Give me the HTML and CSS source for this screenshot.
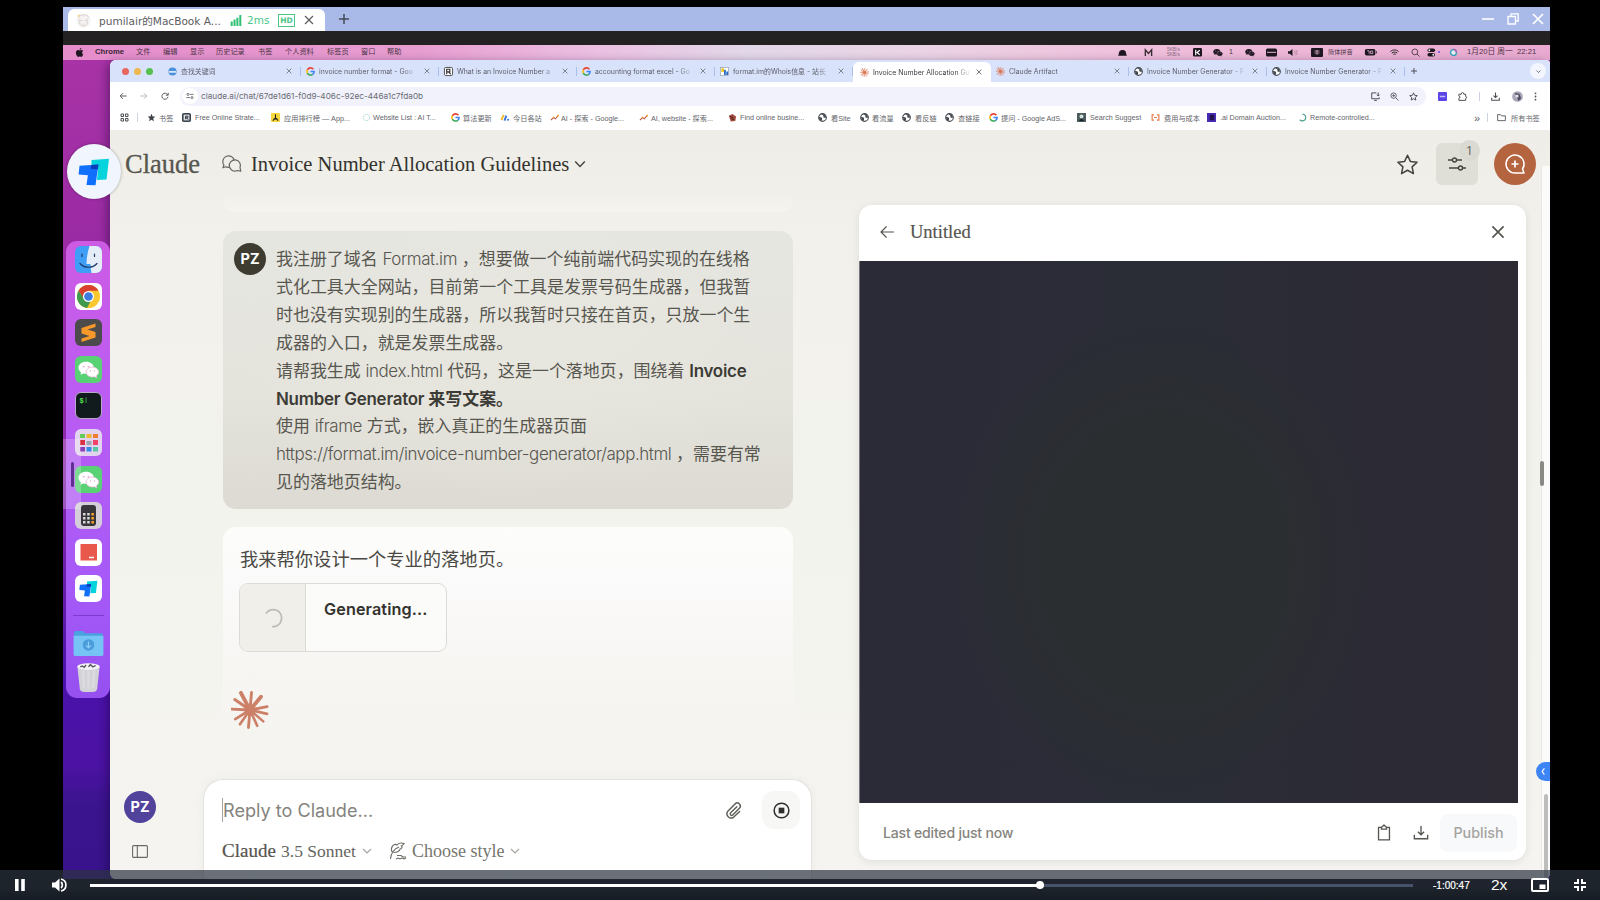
FILE: index.html
```html
<!DOCTYPE html>
<html lang="en">
<head>
<meta charset="utf-8">
<title>Invoice Number Allocation Guidelines</title>
<link rel="stylesheet" href="styles.css">
</head>
<body>
<svg class="defs" aria-hidden="true">
  <symbol id="x" viewBox="0 0 10 10"><path d="M1 1l8 8M9 1l-8 8" fill="none" stroke="currentColor" stroke-width="1.2"/></symbol>
  <symbol id="plus" viewBox="0 0 10 10"><path d="M5 0v10M0 5h10" fill="none" stroke="currentColor" stroke-width="1.5"/></symbol>
  <symbol id="chev" viewBox="0 0 10 10"><path d="M1 3l4 4 4-4" fill="none" stroke="currentColor" stroke-width="1.2"/></symbol>
  <symbol id="google" viewBox="0 0 10 10"><g fill="none" stroke-width="1.8"><path d="M8.2 2.4A4 4 0 0 0 1.5 3.2" stroke="#ea4335"/><path d="M1.5 3.2a4 4 0 0 0 0 3.6" stroke="#fbbc05"/><path d="M1.5 6.8a4 4 0 0 0 6 1.3" stroke="#34a853"/><path d="M7.5 8.1A4 4 0 0 0 9 5H5" stroke="#4285f4"/></g></symbol>
  <symbol id="globe" viewBox="0 0 10 10"><circle cx="5" cy="5" r="4.3" fill="#fff" stroke="#444a50" stroke-width="1.2"/><path d="M1 4.5c2 .3 2.300-.2 3.300 1S3.500 8 4.500 9L2 8zM4 .8c0 2 2.500 1 2 3s2 1.500 3 1.200L8 1.800z" fill="#444a50"/></symbol>
  <symbol id="burst" viewBox="-10 -10 20 20"><g stroke="currentColor" stroke-linecap="round"><path d="M0 0L-4.800-9" stroke-width="2"/><path d="M0 0L.8-9.200" stroke-width="1.500"/><path d="M0 0L5.800-7" stroke-width="2"/><path d="M0 0L9-1.800" stroke-width="1.500"/><path d="M0 0L9 2" stroke-width="1.500"/><path d="M0 0L7 6" stroke-width="1.300"/><path d="M0 0L3.800 8.300" stroke-width="1.400"/><path d="M0 0L-.8 9.200" stroke-width="1.500"/><path d="M0 0L-5.300 7.500" stroke-width="1.400"/><path d="M0 0L-7.800 4.800" stroke-width="1.400"/><path d="M0 0L-9.500-.5" stroke-width="1.500"/><path d="M0 0L-8-5.500" stroke-width="1.600"/></g><circle r="3" fill="currentColor"/></symbol>
  <symbol id="wechat" viewBox="0 0 24 24"><path d="M9.500 4C4.800 4 1.500 6.800 1.500 10.200c0 2 1.100 3.600 2.800 4.800L3.500 17.500l3-1.400c1 .3 2 .4 3 .4 4.600 0 8-2.700 8-6.300S14 4 9.500 4z" fill="currentColor"/><path d="M16 9.500c-3.700 0-6.500 2.300-6.500 5.200s2.800 5.200 6.500 5.200c.8 0 1.600-.1 2.300-.3l2.500 1.300-.6-2.200c1.500-1 2.400-2.400 2.400-4 0-2.900-2.900-5.200-6.600-5.200z" fill="currentColor" class="wc-front"/><g class="wc-eyes"><circle cx="7" cy="9" r="1"/><circle cx="12" cy="9" r="1"/><circle cx="14" cy="13.500" r=".8"/><circle cx="18.200" cy="13.500" r=".8"/></g></symbol>
  <symbol id="star" viewBox="0 0 24 24"><path d="M12 2.300l3 6.500 7 .8-5.200 4.900 1.400 7-6.200-3.500-6.200 3.500 1.400-7L2 9.600l7-.8z" fill="none" stroke="currentColor" stroke-width="1.600" stroke-linejoin="round"/></symbol>
  <symbol id="trend" viewBox="0 0 10 10"><path d="M1 8l3-3 2 1.500L9 3" fill="none" stroke="#c05a45" stroke-width="1.200"/><circle cx="9" cy="2.800" r="1" fill="#f2a825"/><circle cx="4" cy="4.800" r=".8" fill="#f2a825"/></symbol>
  <symbol id="download" viewBox="0 0 18 18"><path d="M9 1v10M5.500 7.500L9 11l3.500-3.500M1.500 11v4.500h15V11" fill="none" stroke="currentColor" stroke-width="1.500"/></symbol>
  <symbol id="todesk" viewBox="0 0 32 28"><path d="M13.500 2L31 .8 28.500 21.500 19 22l1-11-6.500-.5z" fill="#06d3dc"/><path d="M1.500 7.800L20.500 6.500 17.500 27.300 8.500 27l1.400-9.800L.6 16.500z" fill="#1170fb"/><path d="M13.200 7L20.500 6.500 19.800 11.200 12.900 11z" fill="#0a3db8"/></symbol>
</svg>

<div class="stage">
  <div class="remote">
    <div class="rtabs">
      <div class="rtab">
        <svg class="ravatar" viewBox="0 0 16 16"><circle cx="8" cy="8" r="7.500" fill="#f5f3f1"/><path d="M2 5c2-4 10-4 12 0M4 6v5c1 4 7 4 8 0V6M5 8h2M9 8h2M7 12h2" fill="none" stroke="#cdc6c3" stroke-width=".8"/><circle cx="3" cy="3" r="1.300" fill="#efd79c"/></svg>
        <span class="rname">pumilair的MacBook A...</span>
        <svg class="rsig" viewBox="0 0 12 12"><path d="M1.300 7v5M4.400 5v7M7.500 3v9M10.700 0v12" stroke="#31bf74" stroke-width="2.200"/></svg>
        <span class="rping">2ms</span><span class="rhd">HD</span>
        <svg class="rx"><use href="#x"/></svg>
      </div>
      <svg class="rplus"><use href="#plus"/></svg>
      <div class="rwin">
        <svg viewBox="0 0 12 12"><path d="M0 6h12" stroke="#fff" stroke-width="1.600"/></svg>
        <svg viewBox="0 0 12 12"><path d="M1 3.500h7.500V11H1zM4 3V.8h7.200V8H9" fill="none" stroke="#fff" stroke-width="1.300"/></svg>
        <svg viewBox="0 0 12 12"><path d="M1 1l10 10M11 1L1 11" stroke="#fff" stroke-width="1.700"/></svg>
      </div>
    </div>
    <div class="rbar"></div>

    <div class="menubar">
      <svg viewBox="0 0 10 10"><path d="M7 0c.1 1.200-.9 2-1.900 2C5 1 5.900.1 7 0zM9 7.200C8.500 8.600 7.700 9.900 6.800 9.900 6.200 9.900 6 9.500 5.200 9.500s-1 .4-1.600.4C2.500 9.900 1 7.300 1 5.200c0-2 1.300-2.900 2.400-2.900.8 0 1.300.4 1.900.4.500 0 1.100-.5 2-.5.700 0 1.300.3 1.700.9C7.500 4.200 7.700 6.500 9 7.200z"/></svg>
      <b>Chrome</b><span>文件</span><span>编辑</span><span>显示</span><span>历史记录</span><span>书签</span><span>个人资料</span><span>标签页</span><span>窗口</span><span>帮助</span>
      <svg viewBox="0 0 10 10"><path d="M0 8.500C1 8 .8 5.500 1.500 4 2.200 1.500 7.800 1.500 8.500 4c.7 1.500.5 4 1.500 4.500z"/></svg>
      <svg viewBox="0 0 10 10"><path d="M1.500 9V2L5 6l3.500-4v7" fill="none" stroke="#3a2c35" stroke-width="1.500"/></svg>
      <span class="net">5KB/s<br>5KB/s</span>
      <svg viewBox="0 0 10 10"><rect width="10" height="9.500" rx="1.500"/><path d="M3 2v6M7.500 2.500L4.500 5l3 2.500" fill="none" stroke="#fff" stroke-width="1.300"/></svg>
      <svg class="wide" viewBox="0 2 24 20"><use href="#wechat" width="24" height="24"/></svg><span>1</span>
      <svg class="wide" viewBox="0 2 24 20"><use href="#wechat" width="24" height="24"/></svg>
      <svg class="card" viewBox="0 0 11 9"><rect y=".5" width="11" height="8" rx="1.500"/><path d="M1 4.300h9" stroke="#e8b8d8"/></svg>
      <svg viewBox="0 0 10 10"><path d="M0 3.500h2L5 1v8L2 6.500H0z"/><path d="M7 3c1.200 1 1.200 3 0 4M8.600 2c2 2 2 4 0 6" fill="none" stroke="#9a7288" stroke-width=".8"/></svg>
      <svg class="wide" viewBox="0 0 12 9"><rect width="12" height="9" rx="1"/><path d="M3.500 3h5M3.500 5h5M6 2v5" stroke="#d9a8c7" stroke-width=".8"/></svg>
      <span class="dim">简体拼音</span>
      <svg class="batt" viewBox="0 0 14 8"><rect width="12" height="7.500" rx="2"/><path d="M13.300 2.500v2.500" stroke="#333"/><path d="M2.500 2h2.300v3.500M6.500 2.300h2.500v3h-2.500z" stroke="#e8b8d8" fill="none" stroke-width=".9"/></svg>
      <svg viewBox="0 0 10 8"><path d="M.5 3c2.500-2.500 6.500-2.500 9 0M2 4.700c1.800-1.600 4.200-1.600 6 0M3.600 6.200c.9-.7 1.900-.7 2.800 0" fill="none" stroke="#222" stroke-width="1.100"/></svg>
      <svg viewBox="0 0 10 10"><circle cx="4.300" cy="4.300" r="3.200" fill="none" stroke="#4c3c46"/><path d="M6.700 6.700L9.500 9.500" stroke="#4c3c46"/></svg>
      <svg viewBox="0 0 10 10"><rect y=".5" x=".5" width="8.500" height="4" rx="2"/><rect y="5.500" x=".5" width="8.500" height="4" rx="2"/><circle cx="2.600" cy="2.500" r="1" fill="#fff"/><circle cx="7" cy="7.500" r="1" fill="#fff"/></svg>
      <i class="dot"></i>
      <svg viewBox="0 0 10 10"><circle cx="5" cy="5" r="3.300" fill="#e9f1f6" stroke="#3aa4b8" stroke-width="1.600"/><path d="M5 1.700A3.300 3.300 0 0 1 8.300 5" fill="none" stroke="#c05aa6" stroke-width="1.600"/></svg>
      <span class="date">1月20日 周一&nbsp; 22:21</span>
    </div>

    <div class="desktop">
      <div class="dockcol">
        <div class="dock">
          <svg viewBox="0 0 27 27"><rect width="27" height="27" rx="6" fill="#3f9ef5"/><path d="M14.500 0H21a6 6 0 0 1 6 6v15a6 6 0 0 1-6 6h-4.500c-.8-3-1-6-1-9h-4C11.500 11 13 5 14.500 0z" fill="#e4edf8"/><path d="M7 8v2.500M19.500 8v2.500M5 17.500c4.500 5 12.500 5 17 0" fill="none" stroke="#1f3a66" stroke-width="1.200" stroke-linecap="round"/></svg>
          <svg viewBox="0 0 27 27"><rect width="27" height="27" rx="6" fill="#fff"/><circle cx="13.500" cy="13.500" r="11.500" fill="#fbc72f"/><path d="M3.500 7.800a11.500 11.500 0 0 1 20 0h-10L9 16z" fill="#d9412f"/><path d="M3.500 7.800A11.500 11.500 0 0 0 12 25l5-9.500H9z" fill="#3f9a4e"/><circle cx="13.500" cy="13.500" r="5.500" fill="#fff"/><circle cx="13.500" cy="13.500" r="4.300" fill="#3c7be0"/></svg>
          <svg viewBox="0 0 27 27"><rect width="27" height="27" rx="6" fill="#4c4a4b"/><path d="M20.500 4.500L6.500 9v5.500l8 2.500L6.500 19.500V23l14-4.500V13l-8-2.500 8-2.500z" fill="#f7992a"/></svg>
          <svg class="wx" viewBox="0 0 27 27"><rect width="27" height="27" rx="6" fill="#58d275"/><use href="#wechat" x="2" y="1.500" width="23" height="24"/></svg>
          <svg viewBox="0 0 27 27"><rect x=".5" y=".5" width="26" height="26" rx="5.500" fill="#111a1c" stroke="#b9a8c9"/><path d="M11 5.500v5.500" stroke="#2fa43e"/><text x="4.500" y="11" class="prompt">$</text></svg>
          <svg viewBox="0 0 27 27"><rect width="27" height="27" rx="6" fill="#e3d3ee"/><path fill="#63cb57" d="M5 5h5v4H5z"/><path fill="#efb72c" d="M11.500 5h5v4h-5z"/><path fill="#ee7c31" d="M18 5h5v4h-5z"/><path fill="#d93042" d="M5 11h5v5H5z"/><path fill="#9ca5ad" d="M11.500 12h5v4h-5z"/><path fill="#f0456a" d="M18 11h5v5h-5z"/><path fill="#8c3fb8" d="M5 18h5v4.500H5z"/><path fill="#3388e6" d="M11.500 18h5v4.500h-5z"/><path fill="#57c9a0" d="M18 18h5v4.500h-5z"/></svg>
          <svg class="wx" viewBox="0 0 27 27"><rect width="27" height="27" rx="6" fill="#58d275"/><use href="#wechat" x="2" y="1.500" width="23" height="24"/></svg>
          <svg viewBox="0 0 27 27"><rect width="27" height="27" rx="6" fill="#d5cdd9"/><rect x="6" y="3" width="15" height="21" rx="3" fill="#38363b"/><path d="M8 11h2.500v2.500H8zM12.200 11h2.500v2.500h-2.500zM8 15h2.500v2.500H8zM12.200 15h2.500v2.500h-2.500zM8 19h2.500v2.500H8zM12.200 19h2.500v2.500h-2.500z" fill="#d9d9d9"/><path d="M16.400 11h2.500v2.500h-2.500zM16.400 15h2.500v2.500h-2.500zM16.400 19h2.500v2.500h-2.500z" fill="#f6a02d"/></svg>
          <svg viewBox="0 0 27 27"><rect width="27" height="27" rx="6" fill="#fff"/><rect x="5.500" y="5" width="16.500" height="16.500" fill="#e8594b"/><path d="M14 18.500h5" stroke="#fff" stroke-width="1.500"/></svg>
          <svg viewBox="0 0 27 27"><rect width="27" height="27" rx="6" fill="#fff"/><use href="#todesk" x="4" y="5" width="19" height="17"/></svg>
          <i class="docksep"></i>
          <svg class="folder" viewBox="0 0 32 27"><path d="M1 3.500Q1 1 3 1h7l2.500 2.500H29Q31 3.500 31 6v18H1z" fill="#4aa3de"/><path d="M.5 6h31v19.500Q31.500 27 30 27H2Q.5 27 .5 25.500z" fill="#76c3f5"/><circle cx="16" cy="15.500" r="6" fill="#4a9cdb"/><path d="M16 12v6.500M13.500 16l2.500 2.500 2.500-2.500" fill="none" stroke="#8fd0f8" stroke-width="1.200"/></svg>
          <svg class="trash" viewBox="0 0 26 32"><path d="M1.500 5l2.500 23Q4.500 31 9 31h8q4.500 0 5-3L24.500 5z" fill="#d3d2d6"/><path d="M7 9l1.500 18M13 9v19M19 9l-1.500 18" stroke="#dcdbdf" stroke-width="2.500"/><ellipse cx="13" cy="4.800" rx="11.800" ry="3.500" fill="#f2f2f4"/><path d="M4.500 5l2-1 2 1.500 2-2.500M13 5l2-2.500 2.500 2.500 3-1.500" fill="none" stroke="#55545a" stroke-width="1.400"/></svg>
        </div>
        <div class="grip"><i></i></div>
      </div>

      <div class="chrome">
        <div class="tabstrip">
          <div class="lights"><i></i><i></i><i></i></div>
          <div class="tab"><svg class="fav" viewBox="0 0 10 10"><circle cx="5" cy="5" r="4.500" fill="#4b90dc"/><path d="M1 4.500h8v2H1z" fill="#d8e6f7"/></svg><span>查找关键词</span><svg class="tx"><use href="#x"/></svg></div>
          <div class="tab"><svg class="fav"><use href="#google"/></svg><span>invoice number format - Goo</span><svg class="tx"><use href="#x"/></svg></div>
          <div class="tab"><svg class="fav" viewBox="0 0 10 10"><rect x=".5" y=".5" width="9" height="9" rx="1.500" fill="#fff" stroke="#444"/><path d="M3 8V2.500h3.500v3H3M5 5.500L7.500 8" fill="none" stroke="#333" stroke-width="1.300"/></svg><span>What is an Invoice Number a</span><svg class="tx"><use href="#x"/></svg></div>
          <div class="tab"><svg class="fav"><use href="#google"/></svg><span>accounting format excel - Go</span><svg class="tx"><use href="#x"/></svg></div>
          <div class="tab"><svg class="fav" viewBox="0 0 10 10"><rect x=".5" y=".5" width="9" height="9" fill="#fff" stroke="#8a98a8" stroke-width=".7"/><path d="M1.500 1.500h3v4h-3z" fill="#f0c52e"/><path d="M4.500 3h2v6h-2zM7 5h2v4H7z" fill="#2a6cc4"/></svg><span>format.im的Whois信息 - 站长</span><svg class="tx"><use href="#x"/></svg></div>
          <div class="tab active"><svg class="fav claude"><use href="#burst"/></svg><span>Invoice Number Allocation Gu</span><svg class="tx"><use href="#x"/></svg></div>
          <div class="tab"><svg class="fav claude"><use href="#burst"/></svg><span>Claude Artifact</span><svg class="tx"><use href="#x"/></svg></div>
          <div class="tab"><svg class="fav"><use href="#globe"/></svg><span>Invoice Number Generator - F</span><svg class="tx"><use href="#x"/></svg></div>
          <div class="tab"><svg class="fav"><use href="#globe"/></svg><span>Invoice Number Generator - F</span><svg class="tx"><use href="#x"/></svg></div>
          <svg class="newtab"><use href="#plus"/></svg>
          <div class="tabmenu"><svg><use href="#chev"/></svg></div>
        </div>

        <div class="toolbar">
          <svg class="nav" viewBox="0 0 10 10"><path d="M9.500 5H1.500M5 1.500L1.500 5 5 8.500" fill="none" stroke="#55585c" stroke-width="1.200"/></svg>
          <svg class="nav" viewBox="0 0 10 10"><path d="M.5 5h8M5 1.500L8.500 5 5 8.500" fill="none" stroke="#b5b7bb" stroke-width="1.200"/></svg>
          <svg class="nav" viewBox="0 0 10 10"><path d="M8.300 3.500A3.800 3.800 0 1 0 8.700 6M9 1v3H6" fill="none" stroke="#55585c" stroke-width="1.200"/></svg>
          <div class="url">
            <i class="site"><svg viewBox="0 0 10 10"><circle cx="2.500" cy="3" r="1.300" fill="none" stroke="#55585c"/><path d="M5 3h4.500M.5 7H5" stroke="#55585c"/><circle cx="7.500" cy="7" r="1.300" fill="none" stroke="#55585c"/></svg></i>
            <span>claude.ai/chat/67de1d61-f0d9-406c-92ec-446a1c7fda0b</span>
            <svg viewBox="0 0 10 10"><path d="M6 1H.8v6.500h8.400V6M3.500 9.300h3M8 .5v4M6.500 3L8 4.500 9.500 3" fill="none" stroke="#4d4f55" stroke-width="1.100"/></svg>
            <svg viewBox="0 0 10 10"><circle cx="4" cy="4" r="3" fill="none" stroke="#55585c"/><path d="M6.200 6.200L9.500 9.500M2.500 4h3M4 2.500v3" stroke="#55585c"/></svg>
            <svg class="s" viewBox="0 0 24 24"><path d="M12 2.300l3 6.500 7 .8-5.200 4.900 1.400 7-6.200-3.500-6.200 3.500 1.400-7L2 9.600l7-.8z" fill="none" stroke="#4d4f55" stroke-width="2.600"/></svg>
          </div>
          <div class="exts">
            <svg viewBox="0 0 10 10"><rect width="10" height="10" rx="1" fill="#5a45e6"/><path d="M2 5h6" stroke="#c5bdfc" stroke-width="1.500"/></svg>
            <svg viewBox="0 0 10 10"><path d="M1 2.500h2.500Q3.500.6 5 .6t1.500 1.900H8.500V5Q9.600 5 9.600 6T8.500 7v2.300H1V7q1.300-.2 1.300-1.200T1 4.600z" fill="none" stroke="#4d4f55" stroke-width="1.100"/></svg>
            <i class="v"></i>
            <svg viewBox="0 0 10 10"><path d="M5 .5v5.500M2.700 4L5 6.200 7.300 4M.8 6.500v2.700h8.400V6.500" fill="none" stroke="#4d4f55" stroke-width="1.200"/></svg>
            <svg viewBox="0 0 12 12"><circle cx="6" cy="6" r="5.800" fill="#a8a6b8"/><path d="M3 2l5 1 2 5-3 3-2-5z" fill="#4f4a63"/><path d="M4 4h3v3H4z" fill="#e8e2e6"/></svg>
            <svg viewBox="0 0 10 10"><circle cx="5" cy="1.500" r="1"/><circle cx="5" cy="5" r="1"/><circle cx="5" cy="8.500" r="1"/></svg>
          </div>
        </div>

        <div class="bookmarks">
          <svg viewBox="0 0 9 9"><path d="M1 1h2.500v2.500H1zM5.500 1H8v2.500H5.500zM1 5.500h2.500V8H1zM5.500 5.500H8V8H5.500z" fill="none" stroke="#4b4e52"/></svg>
          <i class="v"></i>
          <svg viewBox="0 0 24 24"><path d="M12 2l3 7 7 .600-5.300 5 1.600 7.400L12 18l-6.300 4 1.600-7.400L2 9.600 9 9z" fill="#3f4246"/></svg><span>书签</span>
          <svg viewBox="0 0 10 10"><rect width="10" height="10" rx="2" fill="#3a4550"/><rect x="1.800" y="1.800" width="6.400" height="6.400" fill="#dfe5ea"/><path d="M4 7V3.500h2.500v2H4M5 5.500L7 7.500" fill="none" stroke="#20272e"/></svg><span>Free Online Strate...</span>
          <svg viewBox="0 0 10 10"><rect width="10" height="10" rx="1" fill="#f5d63c"/><path d="M5 1.500v4L2 8.500M5 5.500l3 3M3 6.500h4" fill="none" stroke="#222" stroke-width="1.200"/></svg><span>应用排行榜 — App...</span>
          <svg viewBox="0 0 10 10"><circle cx="5" cy="5" r="3.500" fill="none" stroke="#a5d5d0" stroke-dasharray="2 .8"/></svg><span>Website List : AI T...</span>
          <svg><use href="#google"/></svg><span>算法更新</span>
          <svg viewBox="0 0 10 10"><path d="M1.500 8L4 2" stroke="#f3bb2c" stroke-width="2.200"/><path d="M5 8.500L7 3" stroke="#3b78e0" stroke-width="2.200"/><circle cx="9" cy="7.500" r="1.200" fill="#3b78e0"/></svg><span>今日各站</span>
          <svg><use href="#trend"/></svg><span>AI - 探索 - Google...</span>
          <svg><use href="#trend"/></svg><span>AI, website - 探索...</span>
          <svg viewBox="0 0 10 10"><path d="M1 3l4-2 4 3-1 5-5 .5z" fill="#a44b3f"/><path d="M2 3.500l4 2M3 6l4 1.500" stroke="#4e211c"/></svg><span>Find online busine...</span>
          <svg><use href="#globe"/></svg><span>看Site</span>
          <svg><use href="#globe"/></svg><span>看流量</span>
          <svg><use href="#globe"/></svg><span>看反链</span>
          <svg><use href="#globe"/></svg><span>查链接</span>
          <svg><use href="#google"/></svg><span>提问 - Google AdS...</span>
          <svg viewBox="0 0 10 10"><rect width="10" height="10" fill="#4b5a5d"/><circle cx="5" cy="4" r="2.200" fill="#cfe0da"/><path d="M2 9l3-3 3 3z" fill="#16222b"/></svg><span>Search Suggest</span>
          <svg viewBox="0 0 12 10"><path d="M4 1.500H1.500v7H4M8 1.500h2.500v7H8" fill="none" stroke="#ec7a45" stroke-width="1.500"/><path d="M4 5h4" stroke="#ec7a45" stroke-width="1.300"/></svg><span>费用与成本</span>
          <svg viewBox="0 0 10 10"><rect width="10" height="10" fill="#4a2bb8"/><path d="M3 2h5v6H3z" fill="#221450"/></svg><span>.ai Domain Auction...</span>
          <svg viewBox="0 0 10 10"><path d="M5 1.200A3.800 3.800 0 1 1 2 7.500" fill="none" stroke="#4b9c8c" stroke-width="1.300"/></svg><span>Remote-controlled...</span>
          <span class="more">»</span><i class="v"></i>
          <svg viewBox="0 0 10 10"><path d="M.7 8.500V1.800h3.200L5 3.200h4.300v5.300z" fill="none" stroke="#55585c"/></svg><span>所有书签</span>
        </div>

        <div class="page">
          <header class="head">
            <span class="logo">Claude</span>
            <svg class="chats" viewBox="0 0 20 18"><path d="M7.500 12.300Q4.800 12.600 3.800 11.800L1 12.800l.9-2.800A5.800 5.800 0 1 1 12.300 5.500" fill="none" stroke="#66655f" stroke-width="1.200" stroke-linejoin="round"/><path d="M18 12.700l.8 3.500-3.500-.7a5.600 5.600 0 1 1 2.700-2.800z" fill="none" stroke="#66655f" stroke-width="1.200" stroke-linejoin="round"/></svg>
            <h1>Invoice Number Allocation Guidelines</h1>
            <svg class="hchev"><use href="#chev"/></svg>
            <svg class="fave"><use href="#star"/></svg>
            <div class="tune"><svg viewBox="0 0 18 14"><path d="M0 3h4.500M8.500 3H14M1 11h9.500M14.500 11H18" stroke="#45453f" stroke-width="1.400"/><circle cx="6.500" cy="3" r="2" fill="none" stroke="#45453f" stroke-width="1.400"/><circle cx="12.500" cy="11" r="2" fill="none" stroke="#45453f" stroke-width="1.400"/></svg><b>1</b></div>
            <div class="newchat"><svg viewBox="0 0 20 20"><path d="M19 19h-9a9 9 0 1 1 7.500-4z" fill="none" stroke="#fff" stroke-width="1.500" stroke-linejoin="round"/><path d="M10 6.500v7M6.500 10h7" stroke="#fff" stroke-width="1.700"/></svg></div>
          </header>

          <div class="cols">
            <aside class="side">
              <div class="pz purple">PZ</div>
              <svg viewBox="0 0 16 13"><rect x=".6" y=".6" width="14.800" height="11.800" rx="1" fill="none" stroke="#6a6963" stroke-width="1.100"/><path d="M5.300 .6v11.800" stroke="#6a6963" stroke-width="1.100"/></svg>
            </aside>

            <main class="chat">
              <div class="ghost"></div>
              <section class="user">
                <div class="pz">PZ</div>
                <p>我注册了域名 <span class="lat">Format.im</span>&nbsp;，想要做一个纯前端代码实现的在线格<br>式化工具大全网站，目前第一个工具是发票号码生成器，但我暂<br>时也没有实现别的生成器，所以我暂时只接在首页，只放一个生<br>成器的入口，就是发票生成器。<br>请帮我生成 <span class="lat">index.html</span> 代码，这是一个落地页，围绕着 <b>Invoice</b><br><b>Number Generator <span class="cjkb">来写文案。</span></b><br>使用 <span class="lat">iframe</span> 方式，嵌入真正的生成器页面<br><span class="link">https://format.im/invoice-number-generator/app.html</span>&nbsp;，需要有常<br>见的落地页结构。</p>
              </section>
              <section class="answer">
                <p>我来帮你设计一个专业的落地页。</p>
                <div class="gen"><div class="spin"><svg viewBox="0 0 20 20"><path d="M3 5.500A8.500 8.500 0 1 1 9 18.500" fill="none" stroke="#bdbcb4" stroke-width="1.700"/></svg></div><b>Generating...</b></div>
                <svg class="burst"><use href="#burst"/></svg>
              </section>
              <section class="composer">
                <div class="row1"><span class="ph">Reply to Claude...</span>
                  <svg class="clip" viewBox="0 0 18 18"><path d="M12.500 5.500L6 12a1.500 1.500 0 0 0 2.200 2.200l7-7a3.200 3.200 0 0 0-4.600-4.600L3 10.200a4.500 4.500 0 0 0 6.300 6.300L15.500 10.500" fill="none" stroke="#5d5c57" stroke-width="1.500" stroke-linecap="round"/></svg>
                  <div class="stop"><svg viewBox="0 0 18 18"><circle cx="9" cy="9" r="7.800" fill="none" stroke="#2f2f2d" stroke-width="1.600"/><rect x="6" y="6" width="6" height="6" fill="#2f2f2d"/></svg></div>
                </div>
                <div class="row2"><span class="model">Claude</span><span class="ver">3.5 Sonnet</span><svg class="c"><use href="#chev"/></svg>
                  <svg class="quill" viewBox="0 0 18 18"><path d="M1.500 17C2 11 5 7 10 5M3 10C1 5 5 1 8 3c2-3 6-2 7-1.500-1 1-1 2-2.500 2.500C14 5 12 7 11 7c0 2-3 3.500-6.500 3.500M8 13.500h4l2 1.500h3M7 17l2-1 2 1 2-1 2 1 2-1" fill="none" stroke="#6c6b65" stroke-width="1.100"/></svg>
                  <span class="style">Choose style</span><svg class="c"><use href="#chev"/></svg></div>
              </section>
            </main>

            <section class="artifact">
              <div class="ahead"><svg viewBox="0 0 14 14"><path d="M14 7H1M6.500 1.500L1 7l5.500 5.500" fill="none" stroke="#55544f" stroke-width="1.200"/></svg><span>Untitled</span><svg class="ax"><use href="#x"/></svg></div>
              <div class="code"></div>
              <div class="afoot"><span>Last edited just now</span>
                <svg viewBox="0 0 14 17"><path d="M4 2.500H1.200v13.300h11.600V2.500H10M4.300 4.300V2.200q1-.2 1.300-.8.700-1.100 1.400-1.100t1.400 1.100q.3.600 1.300.8v2.100z" fill="none" stroke="#55544f" stroke-width="1.400"/></svg>
                <svg class="dl"><use href="#download"/></svg><button>Publish</button></div>
            </section>
            <div class="scroll"><i></i></div>
          </div>
          <i class="rgrip"></i>
          <div class="bluetab"><svg viewBox="0 0 10 10"><path d="M6 1.500L3.500 5 6 8.500" fill="none" stroke="#fff" stroke-width="1.300"/></svg></div>
        </div>
      </div>
    </div>
  </div>

  <div class="floating"><svg><use href="#todesk"/></svg></div>

  <div class="player">
    <svg class="pause" viewBox="0 0 10 12"><path d="M0 0h3.600v12H0zM6.200 0h3.600v12H6.200z" fill="#fff"/></svg>
    <svg class="vol" viewBox="0 0 15 14"><path d="M0 4.500h3L7.500.5v13L3 9.500H0z" fill="#fff"/><path d="M9 4c1.800 1.500 1.800 4.500 0 6M9 1c6.500 1.500 6.500 10.500 0 12" fill="none" stroke="#fff" stroke-width="1.700"/></svg>
    <div class="track"><i class="buf"></i><i class="played"></i><i class="knob"></i></div>
    <span class="time">-1:00:47</span><span class="rate">2x</span>
    <svg class="pip" viewBox="0 0 18 14"><rect x="1" y="1" width="16" height="12" rx="1" fill="none" stroke="#fff" stroke-width="2"/><rect x="8.500" y="6.500" width="6" height="4.500" fill="#fff"/></svg>
    <svg class="fs" viewBox="0 0 12 12"><path d="M4 0v4H0M8 0v4h4M4 12V8H0M8 12V8h4" fill="none" stroke="#fff" stroke-width="2"/></svg>
  </div>
</div>
</body>
</html>
```
FILE: styles.css
```css
* { box-sizing: border-box; }
body { margin: 0; background: #000; font-family: "Liberation Sans", "Noto Sans CJK SC", sans-serif; }
svg { display: block; overflow: visible; flex: none; }
i { display: block; flex: none; }
.defs { position: absolute; width: 0; height: 0; }
.stage { position: relative; width: 1600px; height: 900px; background: #000; overflow: hidden; }
.remote { margin: 0 0 0 63px; padding-top: 7px; width: 1487px; height: 879px; display: flex; flex-direction: column; }

/* remote session tabs */
.rtabs { height: 24px; flex: none; background: #a9bae8; display: flex; align-items: center; }
.rtab { margin: 2px 0 0 5px; width: 257px; height: 22px; padding-left: 8px; background: #fff; border-radius: 6px 6px 0 0; display: flex; align-items: center; color: #5c5c5e; }
.ravatar { width: 15px; height: 15px; }
.rname { margin-left: 8px; width: 131px; font: 10.550px "DejaVu Sans", "Noto Sans CJK SC", sans-serif; white-space: nowrap; }
.rsig { width: 12px; height: 11px; }
.rping { margin-left: 5px; width: 31px; font: 10.500px "DejaVu Sans", sans-serif; color: #4cc788; }
.rhd { width: 17px; height: 13px; border: 1px solid #4cc788; font: bold 7.500px/11px "DejaVu Sans", sans-serif; color: #4cc788; text-align: center; }
.rx { width: 10px; height: 10px; margin-left: 9px; }
.rplus { width: 10px; height: 10px; margin-left: 14px; color: #444956; }
.rwin { margin-left: auto; padding-right: 6px; display: flex; gap: 13px; }
.rwin svg { width: 12px; height: 12px; }
.rbar { height: 14px; flex: none; background: #232122; }

/* macOS menu bar */
.menubar { height: 15px; flex: none; padding: 0 0 1px 12px; display: grid; align-items: center; white-space: nowrap; font-size: 7.2px; line-height: 10px; color: #4d3546;
  grid-template-columns: 20px 41px 27px 27px 26px 42px 27px 42px 34px 26px 731px 26px 23px 26px 19px 17px 15px 22px 22px 23px 17px 36px 26px 21px 16px 11px 11px 18px 80px;
  background: linear-gradient(90deg, #e58ccb 0, #e79dd0 24%, #ebc0e2 36%, #e2d7e8 46%, #ead3e4 58%, #efbfdb 72%, #e9a9d0 100%); }
.menubar svg { width: 9px; height: 9px; fill: #1e1620; color: #1e1620; }
.menubar svg.wide { width: 12px; height: 9px; }
.menubar svg.card { width: 11px; height: 9px; }
.menubar svg.batt { width: 14px; height: 7px; }
.menubar b { font-size: 7.700px; color: #3a2534; }
.menubar .net { font-size: 4.8px; line-height: 5px; color: #8a6a80; }
.menubar .dim { font-size: 6.200px; }
.menubar .date { font-size: 7.700px; }
.dot { width: 2px; height: 2px; border-radius: 50%; background: #6a4ee0; }
.wc-front { stroke: #e6b4d4; stroke-width: .8; }
.wc-eyes { fill: #e6b4d4; }
.dock .wc-front { stroke: #58d275; }
.dock .wx { color: #fff; }

.desktop { flex: 1; min-height: 0; display: flex; background: linear-gradient(180deg, #a833a6 0, #9b2ba4 22%, #8a2aa8 50%, #4a12aa 76%, #4c12a4 86%, #3a148e 91%, #38138c 100%); }
.dockcol { width: 47px; flex: none; padding: 181px 0 0 3px; position: relative; }
.dock { width: 44px; height: 457px; border-radius: 11px; padding: 5px 0 0 1px; display: flex; flex-direction: column; align-items: center; gap: 9.600px; background: linear-gradient(180deg, #cd5be3 0, #bd5cf2 30%, #a65af8 75%, #9650f0 100%); }
.dock > svg { width: 27px; height: 27px; }
.dock .docksep { width: 31px; height: 1px; background: #7f3bd0; margin: 3px 0 6px; }
.dock > svg.folder { width: 31px; height: 26px; margin-top: -2px; }
.dock > svg.trash { width: 25px; height: 31px; margin-top: -3px; }
.prompt { font: bold 7px "Liberation Mono", monospace; fill: #54e04f; }
.grip { position: absolute; left: 0; top: 379px; width: 18px; height: 70px; background: rgba(255,255,255,.22); display: flex; align-items: center; padding-left: 8px; }
.grip i { width: 3px; height: 25px; border-radius: 2px; background: #5f2f92; }

/* browser */
.chrome { flex: 1; min-width: 0; display: flex; flex-direction: column; border-radius: 6px 4px 6px 6px; overflow: hidden; background: #fff; box-shadow: -3px 2px 10px rgba(20,0,50,.4); }
.tabstrip { height: 22px; flex: none; background: #d9e2fb; display: flex; align-items: center; }
.lights { width: 53px; padding-left: 12px; display: flex; gap: 5px; }
.lights i { width: 7px; height: 7px; border-radius: 50%; background: #e9665e; }
.lights i:nth-child(2) { background: #eeb851; }
.lights i:nth-child(3) { background: #56bf4d; }
.tab { width: 138px; height: 20px; padding: 0 9px 0 5px; display: flex; align-items: center; position: relative; font: 6.900px Inter, "Noto Sans CJK SC", sans-serif; color: #5c5f69; }
.tab:not(.active)::after { content: ""; position: absolute; right: 0; top: 6px; width: 1px; height: 9px; background: #a9c0ea; }
.tab .fav { width: 9px; height: 9px; }
.tab .fav.claude { color: #d9734f; }
.tab span { margin-left: 4px; width: 102px; white-space: nowrap; -webkit-mask-image: linear-gradient(90deg, #000 82%, transparent 98%); mask-image: linear-gradient(90deg, #000 82%, transparent 98%); }
.tab .tx { width: 6px; height: 6px; margin-left: 3px; }
.tab.active { background: #fff; border-radius: 6px 6px 0 0; height: 20px; align-self: flex-end; color: #3a3c42; padding-left: 7px; }
.tab.active span { width: 100px; }
.newtab { width: 6px; height: 6px; margin-left: 6px; color: #43464d; }
.tabmenu { margin: 0 4px 0 auto; width: 16px; height: 16px; border-radius: 50%; background: #f3f6fe; display: flex; align-items: center; justify-content: center; }
.tabmenu svg { width: 5px; height: 5px; color: #222; }
.toolbar { height: 28px; flex: none; display: flex; align-items: center; padding-left: 9px; }
.nav { width: 8px; height: 8px; margin-right: 13px; }
.url { width: 1246px; height: 19px; margin-left: -2px; border-radius: 10px; background: #f1f2fb; display: flex; align-items: center; padding: 0 8px 0 2px; gap: 10px; font: 8.220px Inter, sans-serif; color: #6a6c74; }
.site { width: 16px; height: 16px; border-radius: 50%; background: #fff; display: flex; align-items: center; justify-content: center; margin-right: -7px; }
.site svg { width: 8px; height: 8px; }
.url > svg { width: 9px; height: 9px; }
.url span { margin-right: auto; }
.exts { display: flex; align-items: center; gap: 11.400px; padding-left: 12px; }
.exts svg { width: 9px; height: 9px; color: #333; fill: #555; }
.exts svg:nth-of-type(4) { width: 11px; height: 11px; margin-right: -3px; }
.v { width: 1px; height: 9px; background: #cdd3e2; }
.bookmarks { height: 20px; flex: none; padding: 0 0 5px 10px; display: grid; align-items: center; white-space: nowrap; font: 7.200px "Liberation Sans", "Noto Sans CJK SC", sans-serif; color: #64656a;
  grid-template-columns: 17px 10px 12px 23px 13px 76px 13px 78px 11px 78px 12px 37px 13px 37px 11px 78px 12px 77px 12px 78px 13px 29px 12px 30px 13px 30px 13px 31px 12px 76px 13px 61px 13px 43px 13px 78px 12px 164px 13px 10px 14px 30px; }
.bookmarks svg { width: 9px; height: 9px; }
.bookmarks .more { font-size: 11px; }

/* conversation page */
.page { position: relative; flex: 1; min-height: 0; display: flex; flex-direction: column; background: linear-gradient(180deg, #eeede7 0, #f2f1ec 15%, #f3f3ee 55%, #f5f4f0 100%); font-family: Inter, "Noto Sans CJK SC", sans-serif; }
.head { height: 65px; flex: none; display: flex; align-items: center; padding: 3px 14px 0 15px; font-family: "Liberation Serif", serif; }
.logo { width: 97px; font-size: 26.500px; color: #57564f; -webkit-text-stroke: .3px #57564f; }
.chats { width: 20px; height: 18px; }
.head h1 { margin: 0 0 0 9px; width: 318px; font-weight: 400; font-size: 20.500px; color: #33322d; white-space: nowrap; }
.hchev { width: 12px; height: 12px; margin-left: 5px; color: #44433e; }
.fave { width: 23px; height: 23px; margin-left: auto; color: #45443f; }
.tune { position: relative; width: 42px; height: 42px; margin-left: 17px; border-radius: 6px; background: #dfdfd7; display: flex; align-items: center; justify-content: center; }
.tune svg { width: 18px; height: 14px; }
.tune b { position: absolute; left: 23px; top: -3px; width: 21px; height: 21px; border-radius: 50%; background: #dad9d2; font: 13px/21px "Open Sans", sans-serif; color: #66645d; text-align: center; }
.newchat { width: 42px; height: 42px; margin: 0 0 0 16px; border-radius: 50%; background: #b56440; display: flex; align-items: center; justify-content: center; }
.newchat svg { width: 20px; height: 20px; }
.cols { flex: 1; min-height: 0; display: flex; }
.side { width: 93px; flex: none; display: flex; flex-direction: column; justify-content: flex-end; padding: 0 0 21px 14px; gap: 22px; }
.side svg { width: 16px; height: 13px; margin-left: 8px; }
.pz { width: 32px; height: 32px; flex: none; border-radius: 50%; background: #3e3c31; color: #fff; font: 700 14.500px/32px Inter, sans-serif; text-align: center; }
.pz.purple { background: #51429c; }
.chat { width: 609px; flex: none; }
.ghost { height: 17px; margin: 0 19px 0 20px; border-radius: 0 0 12px 12px; background: linear-gradient(180deg, #f1f0eb, #f5f4ef); }
.user { height: 278px; margin: 19px 19px 0 20px; padding: 12px 0 0 11px; border-radius: 13px; display: flex; background: radial-gradient(ellipse at 50% 45%, rgba(233,232,223,.7), rgba(233,232,223,0) 65%), linear-gradient(180deg, #e6e6e1, #e4e3dc 60%, #dcdad2); }
.user p { margin: 3px 0 0 10px; font-size: 16.950px; line-height: 27.900px; white-space: nowrap; font-weight: 400; color: #57564f; }
.user p b { font-weight: 600; color: #3c3b35; letter-spacing: -.25px; }
.user .cjkb { letter-spacing: 0; }
.user .lat { letter-spacing: -.4px; font-weight: 350; }
.user .link { letter-spacing: -.42px; font-weight: 350; }
.answer { height: 233px; margin: 18px 19px 0 20px; padding: 18px 0 0 17px; border-radius: 13px 13px 0 0; background: linear-gradient(180deg, #fdfdfb, #fbfafa 25%, #f7f6f3 60%, rgba(247,246,243,0)); }
.answer p { margin: 0; font-size: 18.300px; line-height: 28px; font-weight: 400; color: #4a4944; }
.gen { width: 208px; height: 69px; margin: 10px 0 0 -1px; border: 1px solid #dcdbd6; border-radius: 9px; display: flex; overflow: hidden; background: #fbfbf9; }
.spin { width: 66px; border-right: 1px solid #dcdbd6; background: #f0efe9; display: flex; align-items: center; justify-content: center; }
.spin svg { width: 20px; height: 20px; }
.gen b { margin: 14px 0 0 18px; font-size: 16.200px; font-weight: 600; line-height: 22px; letter-spacing: .1px; color: #33322e; }
.answer .burst { width: 38px; height: 38px; margin: 39px 0 0 -9px; color: #cc8067; }
.composer { height: 100px; margin-top: 19px; border-radius: 20px 20px 0 0; border: 1px solid #e4e3de; border-bottom: 0; background: #fff; padding: 11px 11px 0 18px; box-shadow: 0 0 10px rgba(0,0,0,.04); }
.row1 { display: flex; align-items: center; height: 38px; }
.ph { border-left: 1px solid #a5a49e; font-size: 18.100px; line-height: 24px; color: #85847e; margin-right: auto; }
.clip { width: 17px; height: 18px; }
.stop { width: 38px; height: 38px; margin-left: 20px; border-radius: 12px; background: #f7f7f6; display: flex; align-items: center; justify-content: center; }
.stop svg { width: 17px; height: 17px; }
.row2 { display: flex; align-items: center; height: 24px; margin-top: 10px; font: 19px "Liberation Serif", serif; color: #66655f; white-space: nowrap; }
.model { width: 59px; color: #55544e; -webkit-text-stroke: .2px #55544e; }
.ver { width: 81px; font-size: 17.500px; }
.row2 .c { width: 10px; height: 10px; color: #a5a49e; }
.quill { width: 18px; height: 18px; margin: 0 5px 0 17px; }
.style { width: 98px; font-size: 18px; color: #77766f; }
.artifact { width: 667px; height: 655px; flex: none; margin: 10px 0 0 47px; border-radius: 13px; background: #fff; display: flex; flex-direction: column; box-shadow: 0 2px 10px rgba(0,0,0,.09); }
.ahead { height: 56px; flex: none; display: flex; align-items: center; padding: 0 21px 2px; font: 18.500px "Liberation Serif", serif; color: #55544f; }
.ahead svg { width: 14px; height: 14px; }
.ahead span { margin: 0 auto 0 16px; -webkit-text-stroke: .2px #55544f; }
.ahead .ax { width: 14px; height: 14px; }
.code { flex: 1; margin-right: 8px; border-left: 1px solid #77767c; background: radial-gradient(ellipse 32% 45% at 46% 55%, #2b2e30 0, #2b2e30 50%, rgba(43,46,48,0) 100%), linear-gradient(90deg, #2b2b37, #2a2c36 50%, #2d2a34); }
.afoot { height: 57px; flex: none; display: flex; align-items: center; padding: 2px 9px 0 24px; }
.afoot span { font-size: 14.050px; color: #85847e; margin-right: auto; letter-spacing: -.2px; font-weight: 500; }
.afoot svg { width: 14px; height: 16px; margin-right: 22px; color: #55544f; }
.afoot svg.dl { width: 16px; height: 16px; margin-right: 11px; }
.afoot button { width: 77px; height: 38px; border: 0; border-radius: 8px; background: #f8f9fa; font: 500 14.300px Inter, sans-serif; color: #a5a4a0; padding: 0; }
.scroll { width: 9px; margin-left: 15px; margin-top: -29px; background: #fbfbfa; border-left: 1px solid #e9e8e6; padding: 628px 0 0 2px; }
.scroll i { width: 4px; height: 84px; border-radius: 2px; background: #bdbdbc; }
.rgrip { position: absolute; right: 6px; top: 331px; width: 4px; height: 25px; border-radius: 2px; background: #898985; }
.bluetab { position: absolute; right: 0; top: 632px; width: 14px; height: 19px; border-radius: 10px 0 0 10px; background: #3d84f5; display: flex; align-items: center; justify-content: center; }
.bluetab svg { width: 9px; height: 9px; }

.floating { position: absolute; left: 67px; top: 144px; width: 54px; height: 55px; border-radius: 50%; background: #f1f5fd; box-shadow: 0 0 3px rgba(0,0,0,.35); display: flex; align-items: center; justify-content: center; }
.floating svg { width: 32px; height: 28px; }

/* video controls */
.player { position: absolute; left: 0; right: 0; bottom: 0; height: 30px; background: linear-gradient(180deg, rgba(43,51,63,.7) 60%, rgba(32,40,50,.7)); display: flex; align-items: center; color: #fff; padding-left: 15px; }
.pause { width: 10px; height: 12px; }
.vol { width: 15px; height: 14px; margin-left: 27px; }
.track { position: relative; width: 1323px; height: 3px; margin-left: 23px; background: #46526a; }
.track i { position: absolute; left: 0; top: 0; height: 3px; background: #fff; width: 950px; }
.track .buf { background: #8a96a8; width: 954px; }
.track .knob { left: 946px; top: -3px; width: 8px; height: 8px; border-radius: 50%; }
.time { width: 58px; margin-left: 20px; font-size: 10px; -webkit-text-stroke: .2px #fff; }
.rate { width: 40px; font-size: 15.500px; }
.pip { width: 18px; height: 14px; }
.fs { width: 12px; height: 12px; margin-left: 25px; }
```
